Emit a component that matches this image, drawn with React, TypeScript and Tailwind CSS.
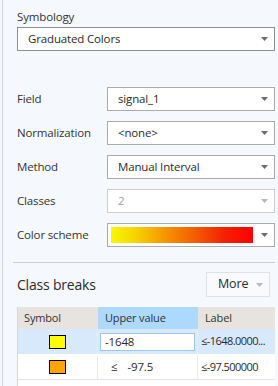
import React from "react";

const Arrow = ({ light = false }: { light?: boolean }) => (
  <svg width="7" height="4" viewBox="0 0 7 4" className="shrink-0">
    <path d="M0 0H7L3.5 4Z" fill={light ? "#b8b8b8" : "#6b6b6b"} />
  </svg>
);

const Dropdown = ({
  children,
  border = "border-[#ababab]",
  disabled = false,
}: {
  children: React.ReactNode;
  border?: string;
  disabled?: boolean;
}) => (
  <div
    className={`flex h-[24px] flex-1 items-center justify-between border bg-white pl-[10px] pr-[6px] ${border} ${
      disabled ? "text-[#a0a0a0]" : "text-[#2b2b2b]"
    }`}
  >
    <span className="truncate">{children}</span>
    <Arrow light={disabled} />
  </div>
);

const fieldRows = [
  { label: "Field", value: "signal_1" },
  { label: "Normalization", value: "<none>" },
  { label: "Method", value: "Manual Interval" },
];

const breaks = [
  { color: "bg-[#ffff00]", value: "-1648", label: "≤-1648.0000...", active: true },
  { color: "bg-[#ffa500]", value: "-97.5", label: "≤-97.500000", active: false },
];

export default function App() {
  return (
    <div className="h-[386px] w-[278px] overflow-hidden bg-[#f5f8fc] font-['Open_Sans','Noto_Sans',sans-serif] text-[11.5px] tracking-[-0.15px] text-[#333333]">
      <div className="ml-[2px] h-full border-l border-[#d4d5dc] pl-[14px] pr-[3px] pt-[9px]">
        <div className="h-[16px] leading-[16px]">Symbology</div>
        <div className="mt-[2px] flex">
          <Dropdown border="border-[#8e9194]">Graduated Colors</Dropdown>
        </div>

        <div className="mt-[36px] flex flex-col gap-[10px]">
          {fieldRows.map((r) => (
            <div key={r.label} className="flex items-center">
              <div className="w-[90px]">{r.label}</div>
              <Dropdown>{r.value}</Dropdown>
            </div>
          ))}
          <div className="flex items-center">
            <div className="w-[90px]">Classes</div>
            <Dropdown border="border-[#cdcdcd]" disabled>
              2
            </Dropdown>
          </div>
          <div className="flex items-center">
            <div className="w-[90px]">Color scheme</div>
            <div className="flex h-[24px] flex-1 items-center gap-[8px] border border-[#ababab] bg-white pl-[3px] pr-[6px]">
              <div className="h-[16px] flex-1 bg-[linear-gradient(to_right,#f8f800,#f6cc00,#f59000,#f45a00,#f52000,#ff0000)]" />
              <Arrow />
            </div>
          </div>
        </div>

        <div className="-ml-[4px] mt-[15px] h-px bg-[#cfd0d6]" />

        <div className="mt-[9px] flex h-[25px] items-center justify-between">
          <div className="text-[14px] tracking-[-0.2px] text-[#2b2b2b]">Class breaks</div>
          <div className="mr-[5px] flex h-[25px] w-[64px] items-center justify-between border border-[#e1e1e1] bg-[#f8fafd] pl-[11px] pr-[6px] text-[12.5px] text-[#2b2b2b]">
            <span>More</span>
            <Arrow light />
          </div>
        </div>

        <div className="mt-[10px] border-l border-[#d6d6d6] bg-white pb-[10px] text-[11px]">
          <div className="flex h-[22px] items-center bg-[#e7e3df] text-[#333333]">
            <div className="w-[80px] pl-[6px]">Symbol</div>
            <div className="flex h-full w-[100px] items-center bg-[#acd9fd] pl-[7px]">Upper value</div>
            <div className="flex-1 pl-[7px]">Label</div>
          </div>
          {breaks.map((b) => (
            <div
              key={b.value}
              className={`flex items-center border-b text-[11.5px] text-[#2b2b2b] ${
                b.active ? "h-[26px] border-[#ffffff] bg-[#d8e9fb]" : "h-[25px] border-[#e3e3e3] bg-white"
              }`}
            >
              <div className="flex h-full w-[80px] items-center justify-center border-r border-[#ececec]">
                <div className={`h-[14px] w-[17px] border border-black ${b.color}`} />
              </div>
              <div className="flex h-full w-[100px] items-center border-r border-[#ececec] px-[2px]">
                {b.active ? (
                  <div className="flex h-[18px] w-full items-center border border-[#9fc6ea] bg-white pl-[4px]">
                    {b.value}
                  </div>
                ) : (
                  <div className="pl-[11px]">
                    ≤<span className="ml-[10px]">{b.value}</span>
                  </div>
                )}
              </div>
              <div className="flex-1 whitespace-nowrap pl-[3px] text-[11px] tracking-[-0.55px]">{b.label}</div>
            </div>
          ))}
        </div>
      </div>
    </div>
  );
}
